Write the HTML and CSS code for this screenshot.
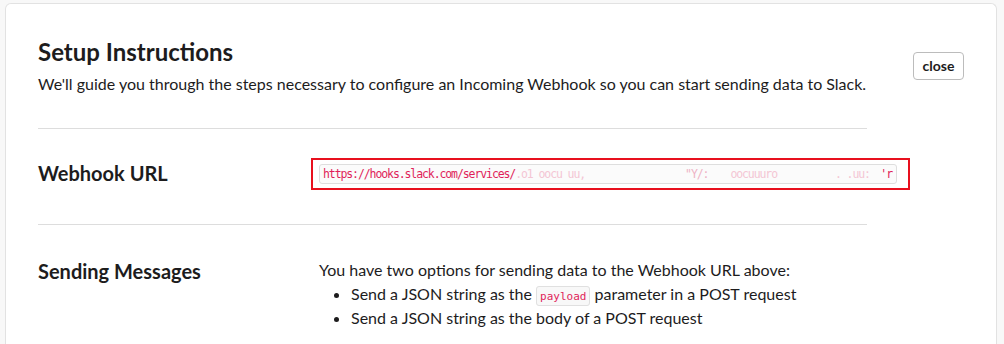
FILE: index.html
```html
<!DOCTYPE html>
<html>
<head>
<meta charset="utf-8">
<link rel="stylesheet" href="styles.css">
</head>
<body>
<div class="card">
  <div class="main">
    <header class="head">
      <h1 class="title">Setup Instructions</h1>
      <p class="sub">We'll guide you through the steps necessary to configure an Incoming Webhook so you can start sending data to Slack.</p>
    </header>
    <div class="row row-url">
      <h2 class="label label-url">Webhook URL</h2>
      <div class="redbox">
        <div class="url">
          <span>https://hooks.slack.com/services/</span>
          <span class="faint">.o1 oocu uu,</span>
          <span class="faint f2">"Y/:</span>
          <span class="faint f3">oocuuuro</span>
          <span class="faint f4">. .uu:</span>
          <span class="end">'r</span>
        </div>
      </div>
    </div>
    <div class="row row-send">
      <h2 class="label">Sending Messages</h2>
      <div class="body">
        <p class="intro">You have two options for sending data to the Webhook URL above:</p>
        <ul class="list">
          <li>Send a JSON string as the <code class="code">payload</code> parameter in a POST request</li>
          <li>Send a JSON string as the body of a POST request</li>
        </ul>
      </div>
    </div>
  </div>
  <div class="side">
    <button class="close">close</button>
  </div>
</div>
</body>
</html>
```
FILE: styles.css
```css
html, body {
  margin: 0;
  padding: 0;
}
body {
  background: #f8f8f8;
  font-family: Lato, "Open Sans", sans-serif;
  color: #1d1c1d;
}
.card {
  margin: 3px 7px 0 5px;
  background: #fff;
  border: 1px solid #e2e2e2;
  border-bottom: none;
  border-radius: 6px 6px 0 0;
  height: 360px;
  box-sizing: border-box;
  padding: 0 32px 0 32px;
  display: flex;
}
.main {
  width: 829px;
  flex-shrink: 0;
}
.side {
  margin-left: auto;
  padding-top: 48px;
}
.close {
  font-family: Lato, sans-serif;
  font-weight: 700;
  font-size: 14px;
  color: #1d1c1d;
  background: #fff;
  border: 1px solid #bcbcbc;
  border-radius: 4px;
  width: 51px;
  height: 28px;
  padding: 0 0 2px 0;
  cursor: pointer;
}
.head {
  padding-top: 33px;
  padding-bottom: 32px;
  border-bottom: 1px solid #dddddd;
}
.title {
  margin: 0;
  font-size: 24px;
  line-height: 30px;
  font-weight: 700;
}
.sub {
  margin: 5px 0 0 0;
  font-size: 16px;
  line-height: 24px;
}
.row {
  display: flex;
  align-items: flex-start;
}
.row-url {
  height: 96px;
  padding-top: 29px;
  box-sizing: border-box;
  border-bottom: 1px solid #dddddd;
}
.label {
  margin: 0;
  width: 273px;
  flex-shrink: 0;
  font-size: 20px;
  line-height: 28px;
  font-weight: 700;
}
.label-url {
  margin-top: 1px;
}
.redbox {
  flex-shrink: 0;
  border: 2px solid #e8101e;
  padding: 4px 11px 4px 6px;
  width: 599px;
  box-sizing: border-box;
}
.url {
  display: flex;
  border: 1px solid #dedede;
  border-radius: 3px;
  background: #fbfbfb;
  font-family: "DejaVu Sans Mono", "Liberation Mono", monospace;
  font-size: 11.5px;
  letter-spacing: -1.1px;
  line-height: 18px;
  color: #e01e5a;
  padding: 0 4px 0 3px;
  white-space: pre;
  overflow: hidden;
}
.faint {
  color: #f4c6d4;
}
.f2 { margin-left: 100px; color: #eeb3c5; }
.f3 { margin-left: 22px; }
.f4 { margin-left: 58px; }
.end { margin-left: auto; }
.row-send {
  padding-top: 32px;
}
.body {
  font-size: 16px;
  line-height: 24px;
  margin-left: 8px;
  margin-top: 1px;
}
.intro {
  margin: 0;
}
.list {
  margin: 0;
  padding-left: 32px;
}
.list li {
  line-height: 24px;
}
.code {
  font-family: "DejaVu Sans Mono", "Liberation Mono", monospace;
  font-size: 11px;
  line-height: 1;
  color: #e01e5a;
  background: #f8f8f8;
  border: 1px solid #e0e0e0;
  border-radius: 3px;
  padding: 3px 3px 2px;
}
```
